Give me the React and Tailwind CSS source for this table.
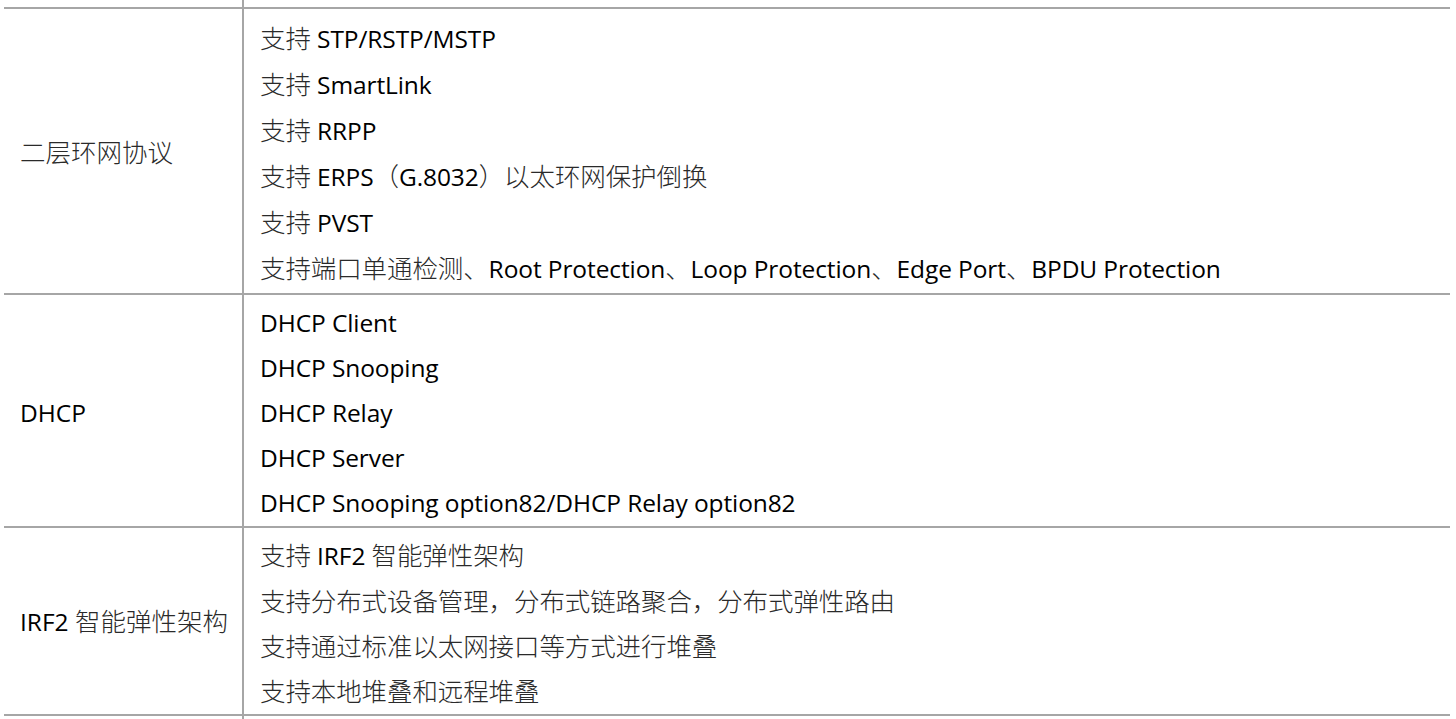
import React from "react";

const CJK = /([\u3000-\u303f\u3400-\u9fff\uff00-\uffef]+)/;

function Txt({ s }) {
  const parts = s.split(CJK).filter((p) => p.length > 0);
  return (
    <>
      {parts.map((p, i) =>
        CJK.test(p) ? (
          <span
            key={i}
            className="text-[25.5px] font-light text-[#2a2a2a] [font-family:'Noto_Sans_CJK_SC',sans-serif]"
          >
            {p}
          </span>
        ) : (
          <span key={i} className="text-[24.5px] text-black [font-family:'Open_Sans','Noto_Sans',sans-serif]">
            {p}
          </span>
        )
      )}
    </>
  );
}

const rows = [
  {
    title: "二层环网协议",
    tpad: "pt-[0px]",
    lh: "h-[46px]",
    pad: "pt-[6px] pb-[2px]",
    items: [
      "支持 STP/RSTP/MSTP",
      "支持 SmartLink",
      "支持 RRPP",
      "支持 ERPS（G.8032）以太环网保护倒换",
      "支持 PVST",
      "支持端口单通检测、Root Protection、Loop Protection、Edge Port、BPDU Protection",
    ],
  },
  {
    title: "DHCP",
    tpad: "pt-[6px]",
    lh: "h-[45px]",
    pad: "pt-[6px]",
    items: [
      "DHCP Client",
      "DHCP Snooping",
      "DHCP Relay",
      "DHCP Server",
      "DHCP Snooping option82/DHCP Relay option82",
    ],
  },
  {
    title: "IRF2 智能弹性架构",
    tpad: "pt-[0px]",
    lh: "h-[45px]",
    pad: "pt-[4px] pb-[2px]",
    items: [
      "支持 IRF2 智能弹性架构",
      "支持分布式设备管理，分布式链路聚合，分布式弹性路由",
      "支持通过标准以太网接口等方式进行堆叠",
      "支持本地堆叠和远程堆叠",
    ],
  },
];

export default function App() {
  return (
    <div className="w-[1456px] h-[719px] overflow-hidden bg-white">
      <div className="ml-[4px] w-[1446px]">
        <div className="flex h-[9px] border-b-2 border-[#a6a6a6]">
          <div className="w-[240px] border-r-2 border-[#a6a6a6]" />
          <div className="flex-1" />
        </div>
        {rows.map((r, i) => (
          <div key={i} className="flex border-b-2 border-[#a6a6a6]">
            <div className={`w-[240px] shrink-0 border-r-2 border-[#a6a6a6] flex items-center pl-[16px] whitespace-nowrap ${r.tpad}`}>
              <div className="leading-none">
                <Txt s={r.title} />
              </div>
            </div>
            <div className={`flex-1 flex flex-col pl-[16px] ${r.pad}`}>
              {r.items.map((it, j) => (
                <div key={j} className={`${r.lh} flex items-center whitespace-nowrap`}>
                  <div className="leading-none tracking-[-0.1px]">
                    <Txt s={it} />
                  </div>
                </div>
              ))}
            </div>
          </div>
        ))}
        <div className="flex h-[20px]">
          <div className="w-[240px] border-r-2 border-[#a6a6a6]" />
          <div className="flex-1" />
        </div>
      </div>
    </div>
  );
}
